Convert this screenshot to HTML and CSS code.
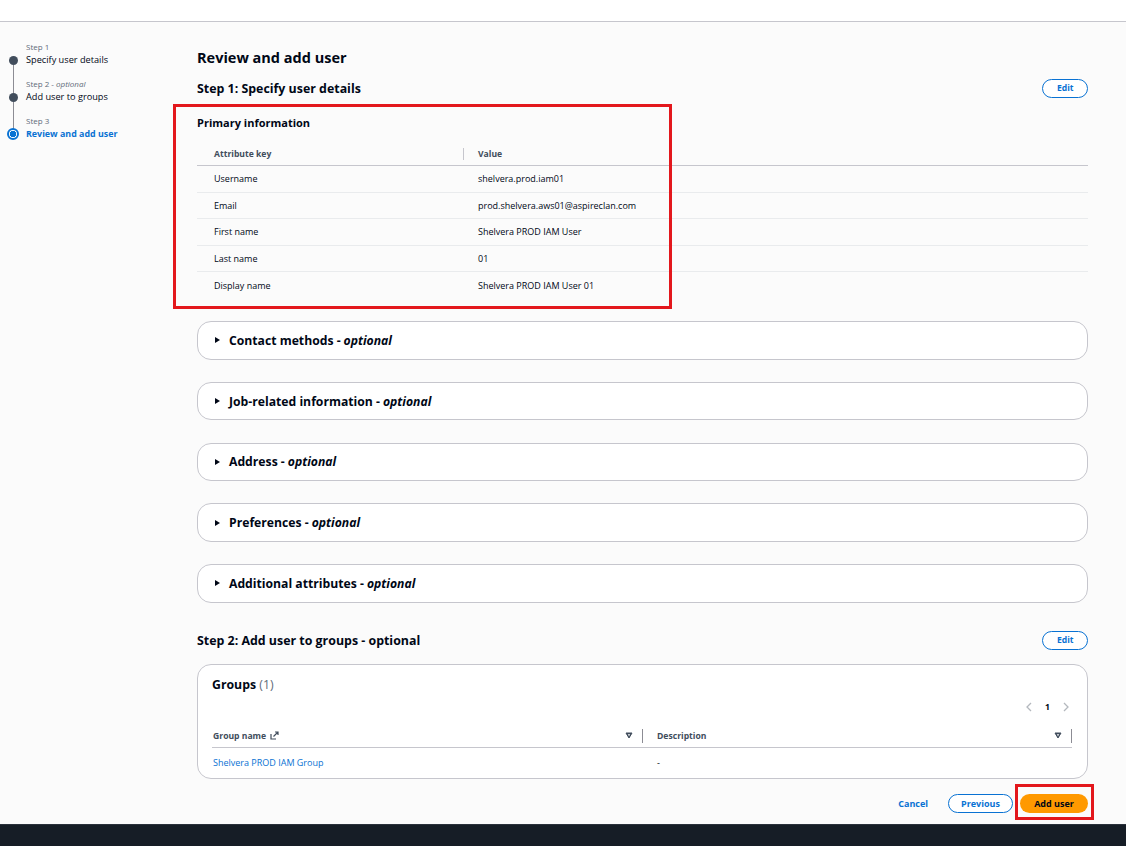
FILE: index.html
```html
<!DOCTYPE html>
<html lang="en">
<head>
    <meta charset="UTF-8">
    <meta name="viewport" content="width=device-width, initial-scale=1.0">
    <title>Review and add user</title>
    <link rel="stylesheet" href="styles.css">
</head>

<body>
    <header class="topbar"></header>

    <div class="layout">
        <nav class="wizard-nav">
            <ol class="steps">
                <li class="step">
                    <div class="marker"><span class="seg seg-hidden"></span><span class="dot"></span><span class="seg seg-fill"></span></div>
                    <div class="step-label">Step 1</div>
                    <div class="step-title">Specify user details</div>
                </li>
                <li class="step">
                    <div class="marker"><span class="seg"></span><span class="dot"></span><span class="seg seg-fill"></span></div>
                    <div class="step-label">Step 2 - <i>optional</i></div>
                    <div class="step-title">Add user to groups</div>
                </li>
                <li class="step current">
                    <div class="marker"><span class="seg"></span><span class="ring"></span></div>
                    <div class="step-label">Step 3</div>
                    <div class="step-title">Review and add user</div>
                </li>
            </ol>
        </nav>

        <main class="content">
            <h1>Review and add user</h1>

            <div class="section-head">
                <h2>Step 1: Specify user details</h2>
                <button class="btn btn-normal" type="button">Edit</button>
            </div>

            <div class="primary">
                <h3>Primary information</h3>
                <div class="kv">
                    <div class="kv-row kv-head">
                        <div class="kv-key">Attribute key</div>
                        <div class="kv-val"><span class="col-sep"></span>Value</div>
                    </div>
                    <div class="kv-row">
                        <div class="kv-key">Username</div>
                        <div class="kv-val">shelvera.prod.iam01</div>
                    </div>
                    <div class="kv-row">
                        <div class="kv-key">Email</div>
                        <div class="kv-val">prod.shelvera.aws01@aspireclan.com</div>
                    </div>
                    <div class="kv-row">
                        <div class="kv-key">First name</div>
                        <div class="kv-val">Shelvera PROD IAM User</div>
                    </div>
                    <div class="kv-row">
                        <div class="kv-key">Last name</div>
                        <div class="kv-val">01</div>
                    </div>
                    <div class="kv-row">
                        <div class="kv-key">Display name</div>
                        <div class="kv-val">Shelvera PROD IAM User 01</div>
                    </div>
                </div>
                <div class="mark mark-primary"></div>
            </div>

            <div class="expanders">
                <div class="expander"><span class="caret"></span>Contact methods - <i>optional</i></div>
                <div class="expander"><span class="caret"></span>Job-related information - <i>optional</i></div>
                <div class="expander"><span class="caret"></span>Address - <i>optional</i></div>
                <div class="expander"><span class="caret"></span>Preferences - <i>optional</i></div>
                <div class="expander"><span class="caret"></span>Additional attributes - <i>optional</i></div>
            </div>

            <div class="section-head step2">
                <h2>Step 2: Add user to groups - optional</h2>
                <button class="btn btn-normal" type="button">Edit</button>
            </div>

            <div class="groups">
                <div class="groups-title">Groups <span class="count">(1)</span></div>
                <div class="pager">
                    <svg width="8" height="10" viewBox="0 0 8 10"><path d="M6 1 L2 5 L6 9" fill="none" stroke="#b4b8be" stroke-width="1.3"/></svg>
                    <span class="page-num">1</span>
                    <svg width="8" height="10" viewBox="0 0 8 10"><path d="M2 1 L6 5 L2 9" fill="none" stroke="#b4b8be" stroke-width="1.3"/></svg>
                </div>
                <div class="grp-table">
                    <div class="grp-row grp-head">
                        <div class="grp-cell">
                            <span>Group name
                                <svg class="ext" width="9" height="9" viewBox="0 0 9 9"><path d="M1 3 V8 H6" fill="none" stroke="#414d5c" stroke-width="1.2"/><path d="M3.5 5.5 L8 1 M5 1 H8 V4" fill="none" stroke="#414d5c" stroke-width="1.2"/></svg>
                            </span>
                            <svg class="sort" width="8" height="7" viewBox="0 0 8 7"><path d="M1 1 H7 L4 6 Z" fill="#414d5c" stroke="#414d5c" stroke-width="1"/><path d="M2.8 2.2 H5.2 L4 4.2 Z" fill="#fff"/></svg>
                        </div>
                        <div class="grp-cell">
                            <span>Description</span>
                            <svg class="sort" width="8" height="7" viewBox="0 0 8 7"><path d="M1 1 H7 L4 6 Z" fill="#414d5c" stroke="#414d5c" stroke-width="1"/><path d="M2.8 2.2 H5.2 L4 4.2 Z" fill="#fff"/></svg>
                        </div>
                    </div>
                    <div class="grp-row">
                        <div class="grp-cell"><a href="#">Shelvera PROD IAM Group</a></div>
                        <div class="grp-cell">-</div>
                    </div>
                </div>
            </div>

            <div class="actions">
                <a class="btn-link" href="#">Cancel</a>
                <button class="btn btn-normal btn-prev" type="button">Previous</button>
                <span class="primary-wrap">
                    <button class="btn btn-primary" type="button">Add user</button>
                    <span class="mark mark-add"></span>
                </span>
            </div>
        </main>
    </div>

    <footer class="bottombar"></footer>
</body>
</html>
```

FILE: styles.css
```css
* {
    box-sizing: border-box;
}

body {
    margin: 0;
    font-family: 'Open Sans', 'Noto Sans', sans-serif;
    color: #000716;
    background-color: #fbfbfb;
}

.topbar {
    height: 22px;
    background-color: #fff;
    border-bottom: 1px solid #c6c6cd;
}

.layout {
    display: grid;
    grid-template-columns: 197px 891px;
    height: 802px;
}

/* left wizard nav */
.steps {
    list-style: none;
    margin: 0;
    padding: 18px 0 0 8px;
}

.step {
    display: grid;
    grid-template-columns: 10px 1fr;
    grid-template-rows: 13px 14px 10px;
    column-gap: 8px;
}

.marker {
    grid-row: 1 / 4;
    display: flex;
    flex-direction: column;
    align-items: center;
}

.seg {
    width: 1px;
    height: 15.5px;
    background-color: #8c8c94;
}

.seg-fill {
    flex: 1;
}

.seg-hidden {
    background: transparent;
}

.dot {
    width: 9px;
    height: 9px;
    flex: none;
    border-radius: 50%;
    background-color: #414d5c;
}

.ring {
    width: 12px;
    height: 12px;
    flex: none;
    margin-top: -1.5px;
    border-radius: 50%;
    border: 2px solid #0972d3;
    background: radial-gradient(circle, #0972d3 0 3px, #fff 3.5px);
}

.step-label {
    font-size: 8px;
    line-height: 13px;
    color: #5f6b7a;
}

.step-title {
    font-size: 9.2px;
    line-height: 14px;
    color: #000716;
}

.current .step-title {
    color: #0972d3;
    font-weight: 700;
    font-size: 8.9px;
}

/* main column */
.content {
    display: flex;
    flex-direction: column;
}

h1 {
    margin: 26px 0 0;
    font-size: 14.5px;
    line-height: 20px;
    font-weight: 700;
}

.section-head {
    margin-top: 10px;
    height: 20px;
    display: flex;
    align-items: center;
    justify-content: space-between;
}

h2 {
    margin: 0;
    font-size: 12.4px;
    font-weight: 700;
}

.btn {
    font-family: inherit;
    font-size: 8.6px;
    font-weight: 700;
    height: 19px;
    padding: 0 13.5px;
    border-radius: 10px;
    cursor: pointer;
}

.btn-normal {
    background-color: #fff;
    color: #0972d3;
    border: 1.5px solid #0972d3;
}

.btn-primary {
    background-color: #ff9900;
    color: #000716;
    border: none;
    width: 68px;
    font-size: 9px;
}

.btn-link {
    font-size: 9px;
    font-weight: 700;
    color: #0972d3;
    text-decoration: none;
}

/* primary information */
.primary {
    position: relative;
    margin-top: 17px;
}

h3 {
    margin: 0 0 11px;
    font-size: 11px;
    line-height: 16px;
    font-weight: 700;
}

.kv-row {
    display: grid;
    grid-template-columns: 266px 1fr;
    align-items: center;
    height: 26.5px;
    border-bottom: 1px solid #e9ebed;
    font-size: 9px;
}

.kv-row:last-child {
    border-bottom: none;
}

.kv-head {
    height: 24px;
    border-bottom: 1px solid #c6c6cd;
    font-weight: 700;
    font-size: 8.6px;
    color: #414d5c;
}

.kv-key {
    padding-left: 17px;
}

.kv-val {
    display: flex;
    align-items: center;
    padding-left: 15px;
}

.col-sep {
    width: 1px;
    height: 12px;
    background-color: #c6c6cd;
    margin-left: -15px;
    margin-right: 14px;
}

.mark {
    position: absolute;
    border: 3px solid #e3171c;
    pointer-events: none;
}

.mark-primary {
    left: -24px;
    top: -11px;
    width: 499px;
    height: 205px;
}

/* expandable sections */
.expanders {
    margin-top: 22.5px;
    display: flex;
    flex-direction: column;
    gap: 22.25px;
}

.expander {
    height: 38.5px;
    display: flex;
    align-items: center;
    padding-left: 17px;
    background-color: #fff;
    border: 1px solid #c6c6cd;
    border-radius: 14px;
    font-size: 12.2px;
    font-weight: 700;
}

.expander i {
    margin-left: 3px;
}

.caret {
    width: 0;
    height: 0;
    margin-right: 9px;
    border-top: 3.5px solid transparent;
    border-bottom: 3.5px solid transparent;
    border-left: 5.5px solid #000716;
}

.step2 {
    margin-top: 27.5px;
}

/* groups */
.groups {
    margin-top: 14px;
    height: 115px;
    padding: 11px 15px 0 14px;
    background-color: #fff;
    border: 1px solid #c6c6cd;
    border-radius: 14px;
}

.groups-title {
    font-size: 12.3px;
    line-height: 17px;
    font-weight: 700;
}

.count {
    color: #5f6b7a;
    font-weight: 400;
}

.pager {
    margin-top: 7px;
    display: flex;
    justify-content: flex-end;
    align-items: center;
    gap: 12px;
    padding-right: 2px;
    height: 14px;
}

.page-num {
    font-size: 8.6px;
    font-weight: 700;
}

.grp-table {
    margin-top: 10px;
}

.grp-row {
    display: grid;
    grid-template-columns: 431px 1fr;
    align-items: center;
    height: 28px;
    font-size: 9px;
}

.grp-head {
    height: 24px;
    border-bottom: 1px solid #c6c6cd;
    font-weight: 700;
    font-size: 8.6px;
    color: #414d5c;
}

.grp-cell {
    display: flex;
    align-items: center;
    justify-content: space-between;
    padding-left: 1px;
}

.grp-head .grp-cell {
    height: 14px;
    padding-right: 9px;
    border-right: 1px solid #8c8c94;
}

.grp-head .grp-cell + .grp-cell {
    padding-left: 14px;
}

.grp-row .grp-cell + .grp-cell {
    padding-left: 14px;
}

.ext {
    margin-left: 2px;
    vertical-align: -1px;
}

.grp-row a {
    color: #0972d3;
    text-decoration: none;
}

/* footer actions */
.actions {
    margin-top: 14px;
    display: flex;
    justify-content: flex-end;
    align-items: center;
    height: 20px;
}

.btn-prev {
    margin-left: 20px;
    width: 65px;
    padding: 0;
    font-size: 9px;
}

.primary-wrap {
    position: relative;
    margin-left: 7px;
    display: flex;
}

.mark-add {
    left: -5px;
    top: -10px;
    right: -6px;
    bottom: -7px;
}

.bottombar {
    height: 22px;
    background-color: #161d26;
    border-top: 1px solid #2a313b;
}
```
